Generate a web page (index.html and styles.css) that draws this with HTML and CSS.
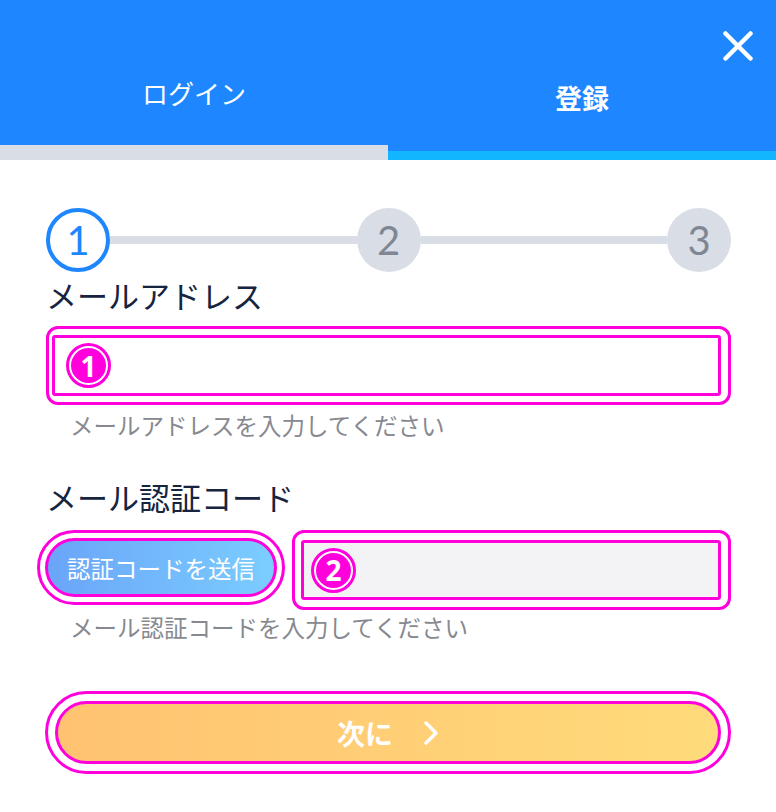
FILE: index.html
```html
<!DOCTYPE html>
<html lang="ja">
<head>
    <meta charset="UTF-8">
    <meta name="viewport" content="width=device-width, initial-scale=1.0">
    <title>登録</title>
    <link rel="stylesheet" href="styles.css">
</head>
<body>
    <!-- Tabs -->
    <div class="tabs">
        <div class="tab">ログイン</div>
        <div class="tab active">登録</div>
        <button class="close-btn" aria-label="閉じる">
            <svg width="30" height="30" viewBox="0 0 30 30">
                <path d="M2.5 2.5 L27.5 27.5 M27.5 2.5 L2.5 27.5" stroke="#fff" stroke-width="4.5" stroke-linecap="round" fill="none"/>
            </svg>
        </button>
    </div>

    <div class="content">
        <!-- Steps -->
        <div class="steps">
            <div class="step current">1</div>
            <div class="step-line"></div>
            <div class="step">2</div>
            <div class="step-line"></div>
            <div class="step">3</div>
        </div>

        <div class="label">メールアドレス</div>
        <div class="mark-box">
            <div class="field">
                <span class="num"><span>1</span></span>
            </div>
        </div>
        <div class="hint">メールアドレスを入力してください</div>

        <div class="label label-code">メール認証コード</div>
        <div class="code-row">
            <div class="mark-box pill send-wrap">
                <button class="send-btn">認証コードを送信</button>
            </div>
            <div class="mark-box code-wrap">
                <div class="field grey">
                    <span class="num"><span>2</span></span>
                </div>
            </div>
        </div>
        <div class="hint hint-code">メール認証コードを入力してください</div>

        <div class="mark-box pill next-wrap">
            <button class="next-btn">次に
                <svg width="16" height="24" viewBox="0 0 16 24">
                    <path d="M3 2 L13 12 L3 22" stroke="#fff" stroke-width="3.5" stroke-linecap="round" stroke-linejoin="round" fill="none"/>
                </svg>
            </button>
        </div>
    </div>
</body>
</html>
```

FILE: styles.css
```css
body {
    margin: 0;
    background-color: #fff;
    font-family: "Noto Sans CJK JP", "Noto Sans", sans-serif;
}

.tabs {
    position: relative;
    display: flex;
    height: 160px;
    background-color: #1e87ff;
}

.tab {
    flex: 1;
    box-sizing: border-box;
    text-align: center;
    color: #fff;
    font-size: 26px;
    line-height: 36px;
    padding-top: 75px;
    border-bottom: 15px solid #d9dde5;
}

.tab.active {
    font-weight: bold;
    font-size: 27px;
    padding-top: 80px;
    border-bottom: 9px solid #12b6ff;
}

.close-btn {
    position: absolute;
    top: 31px;
    right: 23px;
    padding: 0;
    border: none;
    background: none;
    line-height: 0;
}

.content {
    padding: 48px 45px 0 46px;
}

.steps {
    display: flex;
    align-items: center;
}

.step {
    box-sizing: border-box;
    width: 64px;
    height: 64px;
    border-radius: 50%;
    background: #d9dde5;
    color: #7f8794;
    font-family: "Lato", sans-serif;
    font-size: 40px;
    display: flex;
    align-items: center;
    justify-content: center;
}

.step.current {
    background: #fff;
    border: 4px solid #1e87ff;
    color: #1e87ff;
}

.step-line {
    flex: 1;
    height: 8px;
    background: #d9dde5;
}

.label {
    margin-top: 3px;
    font-size: 31px;
    line-height: 40px;
    color: #162440;
}

.label-code {
    margin-top: 36px;
}

.hint {
    margin-top: 4px;
    padding-left: 24px;
    font-size: 23.5px;
    line-height: 32px;
    color: #86898f;
}

.hint-code {
    margin-top: 1px;
}

/* magenta marking frames */
.mark-box {
    margin-top: 11px;
    border: 3px solid #ff00dc;
    border-radius: 12px;
    padding: 6px 7px 6px 3px;
}

.mark-box.pill {
    border-radius: 45px;
}

.field {
    box-sizing: border-box;
    height: 61px;
    border: 3px solid #ff00dc;
    border-radius: 3px;
    background: #fff;
    display: flex;
    align-items: center;
    padding-left: 11px;
}

.field.grey {
    background: #f3f3f6;
    height: 60px;
    padding-left: 7px;
}

.num {
    box-sizing: border-box;
    width: 45px;
    height: 45px;
    border: 3px solid #ff00dc;
    border-radius: 50%;
    padding: 2px;
    background: #fff;
}

.num span {
    display: flex;
    align-items: center;
    justify-content: center;
    width: 100%;
    height: 100%;
    border-radius: 50%;
    background: #ff00dc;
    color: #fff;
    font-family: "Noto Sans", sans-serif;
    font-weight: bold;
    font-size: 28px;
}

.code-row {
    display: flex;
    align-items: flex-start;
    gap: 7px;
    margin-top: 13px;
    margin-left: -9px;
}

.code-row .mark-box {
    margin-top: 0;
}

.send-wrap {
    width: 248px;
    box-sizing: border-box;
    padding: 5px;
}

.send-btn {
    width: 100%;
    height: 59px;
    border: 3px solid #ff00dc;
    border-radius: 35px;
    background: linear-gradient(to right, #6aa5f8, #7bcdff);
    color: #fff;
    font-family: "Noto Sans CJK JP", sans-serif;
    font-size: 23.5px;
    padding: 0;
}

.code-wrap {
    flex: 1;
    padding: 7px 7px 7px 6px;
}

.next-wrap {
    margin-top: 48px;
    margin-left: -1px;
    padding: 7px;
}

.next-btn {
    width: 100%;
    height: 63px;
    border: 3px solid #ff00dc;
    border-radius: 35px;
    background: linear-gradient(to right, #ffc271, #ffdb7b);
    color: #fff;
    font-family: "Noto Sans CJK JP", sans-serif;
    font-weight: bold;
    font-size: 28px;
    display: flex;
    align-items: center;
    justify-content: center;
    gap: 30px;
    padding: 0;
}
```
